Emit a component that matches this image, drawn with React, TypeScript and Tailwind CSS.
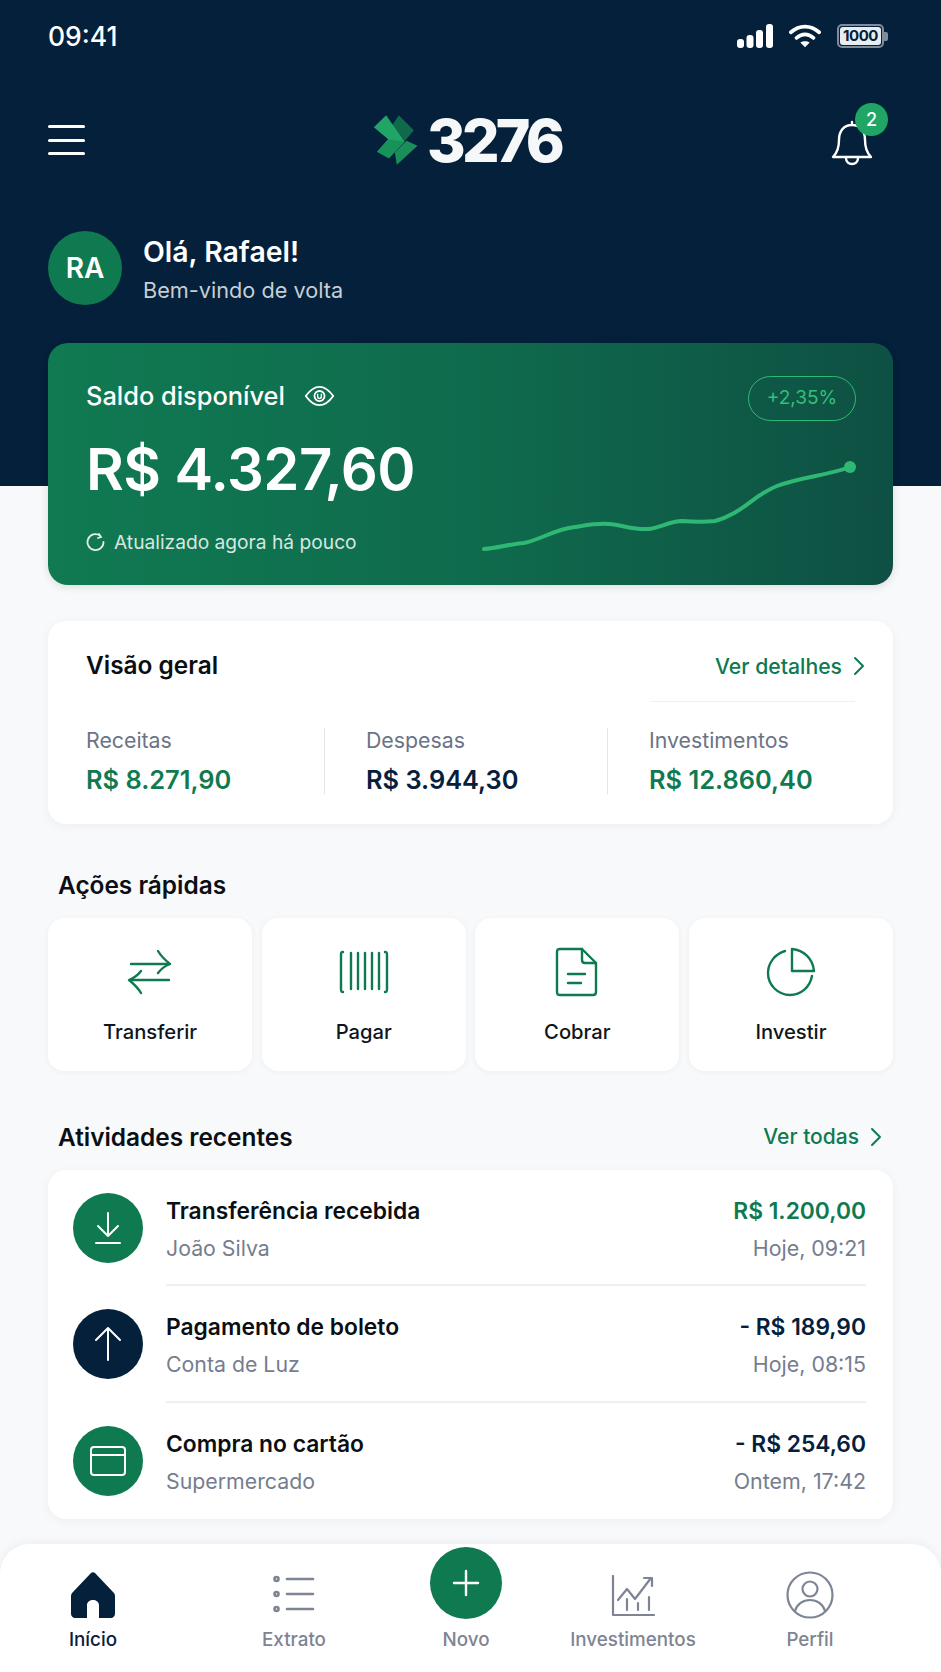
import React from "react";

const Chevron = () => (
  <svg width="12" height="20" viewBox="0 0 12 20" fill="none" stroke="currentColor" strokeWidth="2" strokeLinecap="round" strokeLinejoin="round">
    <path d="M2 2l8 8-8 8" />
  </svg>
);

const rows = [
  { title: "Transferência recebida", sub: "João Silva", amount: "R$ 1.200,00", time: "Hoje, 09:21", amountCls: "text-[#0f7a50]", bg: "bg-[#0f7a50]", icon: "down" },
  { title: "Pagamento de boleto", sub: "Conta de Luz", amount: "- R$ 189,90", time: "Hoje, 08:15", amountCls: "text-[#06203c]", bg: "bg-[#04203a]", icon: "up" },
  { title: "Compra no cartão", sub: "Supermercado", amount: "- R$ 254,60", time: "Ontem, 17:42", amountCls: "text-[#06203c]", bg: "bg-[#0f7a50]", icon: "card" },
];

const RowIcon = ({ name }: { name: string }) => (
  <svg width="36" height="40" viewBox="0 0 36 40" fill="none" stroke="#fff" strokeWidth="2" strokeLinecap="round" strokeLinejoin="round">
    {name === "down" && <path d="M18 5v23M8 18l10 10 10-10M6 35h24" />}
    {name === "up" && <path d="M18 36V4M6 16L18 4l12 12" />}
    {name === "card" && (
      <>
        <rect x="1" y="6" width="34" height="28" rx="3" />
        <path d="M1 14h34" />
      </>
    )}
  </svg>
);

function QuickIcon({ name }: { name: string }) {
  const c = { fill: "none", stroke: "#0f7a50", strokeWidth: 2.4, strokeLinecap: "round" as const, strokeLinejoin: "round" as const };
  if (name === "transfer")
    return (
      <svg width="50" height="48" viewBox="0 0 50 48" {...c}>
        <path d="M6 16h38M44 32H6" />
        <path d="M33 3c3 5 7 9 12 13-5 2-9 5-12 9" />
        <path d="M16 45C13 40 9 36 4 32c5-2 9-5 12-9" />
      </svg>
    );
  if (name === "bar")
    return (
      <svg width="50" height="46" viewBox="0 0 50 46" {...c}>
        <path d="M4 3C2 3 2 4 2 6v34c0 2 0 3 2 3M46 3c2 0 2 1 2 3v34c0 2 0 3-2 3M12 4v36M19 4v36M26 4v36M33 4v36M40 4v36" />
      </svg>
    );
  if (name === "doc")
    return (
      <svg width="44" height="50" viewBox="0 0 44 50" {...c}>
        <path d="M5 2h22l14 14v29c0 2-1 3-3 3H5c-2 0-3-1-3-3V5c0-2 1-3 3-3z" />
        <path d="M27 2v11c0 2 1 3 3 3h11M13 27h17M13 36h13" />
      </svg>
    );
  return (
    <svg width="50" height="50" viewBox="0 0 50 50" {...c}>
      <path d="M19 4C9 7 2 16 2 26c0 12 10 22 22 22 11 0 20-8 22-19" />
      <path d="M26 2c12 1 21 10 22 22H26z" />
    </svg>
  );
}

const Home = () => (
  <svg width="44" height="46" viewBox="0 0 44 46">
    <path fillRule="evenodd" fill="#04203a" d="M20 1c1-1 3-1 4 0l18 19c1 1 2 2 2 4v18c0 2-2 4-4 4H28V33c0-3-3-5-6-5s-6 2-6 5v13H4c-2 0-4-2-4-4V24c0-2 1-3 2-4z" />
  </svg>
);
const Extrato = () => (
  <svg width="42" height="38" viewBox="0 0 42 38" fill="none" stroke="#7d8493" strokeWidth="2.6" strokeLinecap="round">
    <circle cx="3.5" cy="4" r="2" />
    <circle cx="3.5" cy="19" r="2" />
    <circle cx="3.5" cy="34" r="2" />
    <path d="M14 4h26M14 19h26M14 34h26" />
  </svg>
);
const Invest = () => (
  <svg width="44" height="42" viewBox="0 0 44 42" fill="none" stroke="#7d8493" strokeWidth="2.2" strokeLinecap="round" strokeLinejoin="round">
    <path d="M2 1v39h41" />
    <path d="M7 25l9-11 8 10 16-21M33 3h8v8" />
    <path d="M16 24v11M27 28v7M38 22v13" />
  </svg>
);
const Perfil = () => (
  <svg width="48" height="48" viewBox="0 0 48 48" fill="none" stroke="#7d8493" strokeWidth="2.2" strokeLinecap="round">
    <circle cx="24" cy="24" r="22.5" />
    <circle cx="24" cy="18" r="7.5" />
    <path d="M9 40c2-7 8-11 15-11s13 4 15 11" />
  </svg>
);

export default function App() {
  return (
    <div className="w-[941px] h-[1672px] flex flex-col bg-[#f8f9fb] overflow-hidden font-['Inter',sans-serif]">
      {/* Header */}
      <header className="h-[486px] shrink-0 bg-[#04203a] px-[48px] pt-[18px] text-white">
        <div className="h-[36px] flex items-center justify-between">
          <span className="text-[26.5px] font-medium leading-none">09:41</span>
          <div className="flex items-center gap-[16px] mr-[5px]">
            <svg width="36" height="24" viewBox="0 0 36 24" fill="#fff">
              <rect x="0" y="15" width="7" height="9" rx="3" />
              <rect x="9.5" y="11" width="7" height="13" rx="3" />
              <rect x="19" y="6" width="7" height="18" rx="3" />
              <rect x="29" y="0" width="7" height="24" rx="3" />
            </svg>
            <svg width="32" height="26" viewBox="0 0 34 26" fill="none" stroke="#fff" strokeWidth="4" strokeLinecap="round">
              <path d="M2 9c9-8 21-8 30 0M8 15c6-5 12-5 18 0" />
              <path d="M17 25l-5-5c3-2 7-2 10 0z" fill="#fff" stroke="none" />
            </svg>
            <div className="flex items-center">
              <div className="w-[47px] h-[24px] rounded-[5px] border-[2px] border-[#7f8c9b] flex items-center justify-center p-[1px]">
                <span className="w-full h-full rounded-[3px] bg-[#e8edf0] text-[#04203a] text-[15px] font-bold leading-[18px] text-center tracking-[-0.5px]">1000</span>
              </div>
              <div className="w-[4px] h-[9px] bg-[#7f8c9b] rounded-r-[2px]" />
            </div>
          </div>
        </div>

        <div className="mt-[53px] h-[66px] flex items-center justify-between">
          <div className="w-[37px] flex flex-col gap-[10.5px]">
            <div className="h-[3px] bg-white rounded-full" />
            <div className="h-[3px] bg-white rounded-full" />
            <div className="h-[3px] bg-white rounded-full" />
          </div>
          <div className="flex items-center gap-[9px] ml-[16px]">
            <svg width="45" height="50" viewBox="44 78 132 150">
              <path d="M98 112l22-33 45 45-30 36z" fill="#0e6a4a" />
              <path d="M176 170l-62 57-6-37 35-35z" fill="#1a8f5a" />
              <path d="M45 115l37-36 55 79-47 50-35-20 33-37z" fill="#20a566" />
              <path d="M137 158l-47 50-35-20 33-37z" fill="#17935a" />
            </svg>
            <span className="text-[59px] font-extrabold leading-none tracking-[-0.065em] text-[#f6f7f8]">3276</span>
          </div>
          <div className="relative w-[55px] h-[50px] mr-[5px]">
            <svg width="42" height="46" viewBox="0 0 42 46" fill="none" stroke="#fff" strokeWidth="2.4" strokeLinecap="round" strokeLinejoin="round" className="mt-[5px] -ml-[2px]">
              <path d="M21 2v3M21 5C12 5 8 12 8 20c0 8-2 13-6 17h38c-4-4-6-9-6-17 0-8-4-15-13-15zM15 38c0 4 3 6 6 6s6-2 6-6" />
            </svg>
            <span className="absolute right-0 -top-[12px] w-[33px] h-[33px] rounded-full bg-[#1fa564] flex items-center justify-center text-[18px] font-medium">2</span>
          </div>
        </div>

        <div className="mt-[58px] flex items-center gap-[21px]">
          <div className="w-[74px] h-[74px] rounded-full bg-[#0f7a50] flex items-center justify-center text-[28px] font-semibold">RA</div>
          <div className="flex flex-col pt-[1px]">
            <span className="text-[28.4px] leading-[36px] font-semibold">Olá, Rafael!</span>
            <span className="text-[21.7px] leading-[28px] mt-[6px] text-[#c6ced6]">Bem-vindo de volta</span>
          </div>
        </div>
      </header>

      {/* Main */}
      <main className="flex-1 px-[48px] -mt-[143px] min-h-0">
        <section className="h-[242px] rounded-[20px] bg-gradient-to-r from-[#107a52] via-[#0f6b4d] to-[#0e5043] flex justify-between pl-[38px] pr-[37px] pt-[33px] text-white shadow-[0_2px_8px_rgba(0,0,0,0.12)]">
          <div>
            <div className="flex items-center gap-[19px] h-[40px]">
              <span className="text-[25.4px] font-medium">Saldo disponível</span>
              <svg width="31" height="22" viewBox="0 0 32 24" fill="none" stroke="#fff" strokeWidth="2" strokeLinejoin="round">
                <path d="M1 12C6 5 11 2 16 2s10 3 15 10c-5 7-10 10-15 10S6 19 1 12z" />
                <circle cx="16" cy="12" r="5.5" />
                <path d="M14 9.5v3c0 3 4 3 4 0v-3" strokeWidth="1.5" />
              </svg>
            </div>
            <div className="mt-[18px] text-[58px] leading-[70px] font-semibold tracking-[-0.01em]">R$ 4.327,60</div>
            <div className="mt-[24px] flex items-center gap-[9px] text-[#d9e6e0] text-[19.2px]">
              <svg width="19" height="20" viewBox="0 0 19 20" fill="none" stroke="#e6efe9" strokeWidth="1.8" strokeLinecap="round">
                <path d="M14 3.5A8 8 0 1 0 17.5 10M13 2l2 3-3 1" />
              </svg>
              <span>Atualizado agora há pouco</span>
            </div>
          </div>
          <div className="flex flex-col items-end">
            <div className="w-[108px] h-[45px] rounded-full border border-[#2fb873] flex items-center justify-center text-[#34c07a] text-[19px]">+2,35%</div>
            <svg width="378" height="100" viewBox="0 0 378 100" fill="none" className="mt-[35px] -mr-[2px]">
              <path d="M4 93C18 92 30 88 44 87C60 84 75 73 95 71C108 69 118 67 129 68C142 69 154 74 168 73C180 72 190 65 202 65C214 66 226 66 235 65C262 58 272 40 297 30C320 21 350 19 370 11" stroke="#2fb873" strokeWidth="4" strokeLinecap="round" />
              <circle cx="370" cy="11" r="6" fill="#2fb873" />
            </svg>
          </div>
        </section>

        <section className="mt-[36px] h-[203px] rounded-[18px] bg-white shadow-[0_2px_10px_rgba(15,30,60,0.05)] pl-[38px] pr-[28px] pt-[26px]">
          <div className="flex items-center justify-between h-[38px]">
            <span className="text-[24.4px] font-semibold text-[#0b0f14] -mt-[1px]">Visão geral</span>
            <span className="flex items-center gap-[11px] text-[#0f7a50] text-[21.2px] font-medium mt-[1px]">Ver detalhes <Chevron /></span>
          </div>
          <div className="ml-[564px] mt-[16px] mr-[10px] h-px bg-[#eef0f3]" />
          <div className="mt-[26px] flex h-[66px]">
            <div className="w-[239px] border-r border-[#e3e5ea]">
              <div className="text-[21.3px] leading-[24px] text-[#6b7485]">Receitas</div>
              <div className="mt-[13px] text-[25.4px] leading-[30px] font-semibold text-[#0f7a50]">R$ 8.271,90</div>
            </div>
            <div className="w-[283px] pl-[41px] border-r border-[#e3e5ea]">
              <div className="text-[21.3px] leading-[24px] text-[#6b7485]">Despesas</div>
              <div className="mt-[13px] text-[25.4px] leading-[30px] font-semibold text-[#06203c]">R$ 3.944,30</div>
            </div>
            <div className="pl-[41px]">
              <div className="text-[21.3px] leading-[24px] text-[#6b7485]">Investimentos</div>
              <div className="mt-[13px] text-[25.4px] leading-[30px] font-semibold text-[#0f7a50]">R$ 12.860,40</div>
            </div>
          </div>
        </section>

        <h2 className="mt-[45px] pl-[10px] h-[32px] text-[24.4px] leading-[32px] font-semibold text-[#0b0f14]">Ações rápidas</h2>
        <div className="mt-[17px] grid grid-cols-4 gap-[9.5px]">
          {[
            ["Transferir", "transfer"],
            ["Pagar", "bar"],
            ["Cobrar", "doc"],
            ["Investir", "pie"],
          ].map(([label, icon]) => (
            <div key={label} className="h-[153px] rounded-[16px] bg-white shadow-[0_1px_6px_rgba(15,30,60,0.05)] flex flex-col items-center">
              <div className="h-[50px] mt-[29px] flex items-center"><QuickIcon name={icon} /></div>
              <span className="mt-[23px] text-[20.2px] leading-[24px] font-medium text-[#10151b]">{label}</span>
            </div>
          ))}
        </div>

        <div className="mt-[50px] pl-[10px] pr-[11px] flex items-center justify-between h-[32px]">
          <h2 className="text-[24.4px] font-semibold text-[#0b0f14]">Atividades recentes</h2>
          <span className="flex items-center gap-[11px] text-[#0f7a50] text-[21px] font-medium">Ver todas <Chevron /></span>
        </div>
        <div className="mt-[17px] h-[349px] rounded-[18px] bg-white shadow-[0_2px_10px_rgba(15,30,60,0.05)] pl-[25px] pr-[27px] flex flex-col">
          {rows.map((r, i) => (
            <div key={r.title} className="flex-1 flex">
              <div className={`w-[70px] h-[70px] mt-[23px] rounded-full ${r.bg} flex items-center justify-center shrink-0`}>
                <RowIcon name={r.icon} />
              </div>
              <div className={`ml-[23px] flex-1 flex justify-between pt-[26px] ${i < 2 ? "border-b-2 border-[#eff0f4]" : ""}`}>
                <div>
                  <div className="text-[22.8px] leading-[30px] font-semibold text-[#0b0f14]">{r.title}</div>
                  <div className="mt-[7px] text-[21.3px] leading-[30px] text-[#757d8e]">{r.sub}</div>
                </div>
                <div className="text-right">
                  <div className={`text-[22.8px] leading-[30px] font-semibold ${r.amountCls}`}>{r.amount}</div>
                  <div className="mt-[7px] text-[21.4px] leading-[30px] text-[#757d8e]">{r.time}</div>
                </div>
              </div>
            </div>
          ))}
        </div>
      </main>

      {/* Bottom nav */}
      <nav className="h-[128px] shrink-0 rounded-t-[30px] bg-white shadow-[0_-2px_10px_rgba(15,30,60,0.05)] flex relative">
        <div className="w-[186px] flex flex-col items-center pt-[28px]">
          <Home />
          <span className="mt-[8px] text-[18.8px] font-medium text-[#04203a]">Início</span>
        </div>
        <div className="w-[216px] flex flex-col items-center pt-[31px]">
          <Extrato />
          <span className="mt-[13px] text-[18.8px] font-medium text-[#7d8493]">Extrato</span>
        </div>
        <div className="w-[128px] flex flex-col items-center pt-[3px]">
          <div className="w-[72px] h-[72px] rounded-full bg-[#0f7a50] flex items-center justify-center">
            <svg width="28" height="28" viewBox="0 0 28 28" stroke="#fff" strokeWidth="2.4" strokeLinecap="round"><path d="M14 2v24M2 14h24" /></svg>
          </div>
          <span className="mt-[7px] text-[18.8px] font-medium text-[#7d8493]">Novo</span>
        </div>
        <div className="w-[206px] flex flex-col items-center pt-[31px]">
          <Invest />
          <span className="mt-[9px] text-[18.8px] font-medium text-[#7d8493]">Investimentos</span>
        </div>
        <div className="w-[148px] flex flex-col items-center pt-[27px]">
          <Perfil />
          <span className="mt-[7px] text-[18.8px] font-medium text-[#7d8493]">Perfil</span>
        </div>
      </nav>
    </div>
  );
}
